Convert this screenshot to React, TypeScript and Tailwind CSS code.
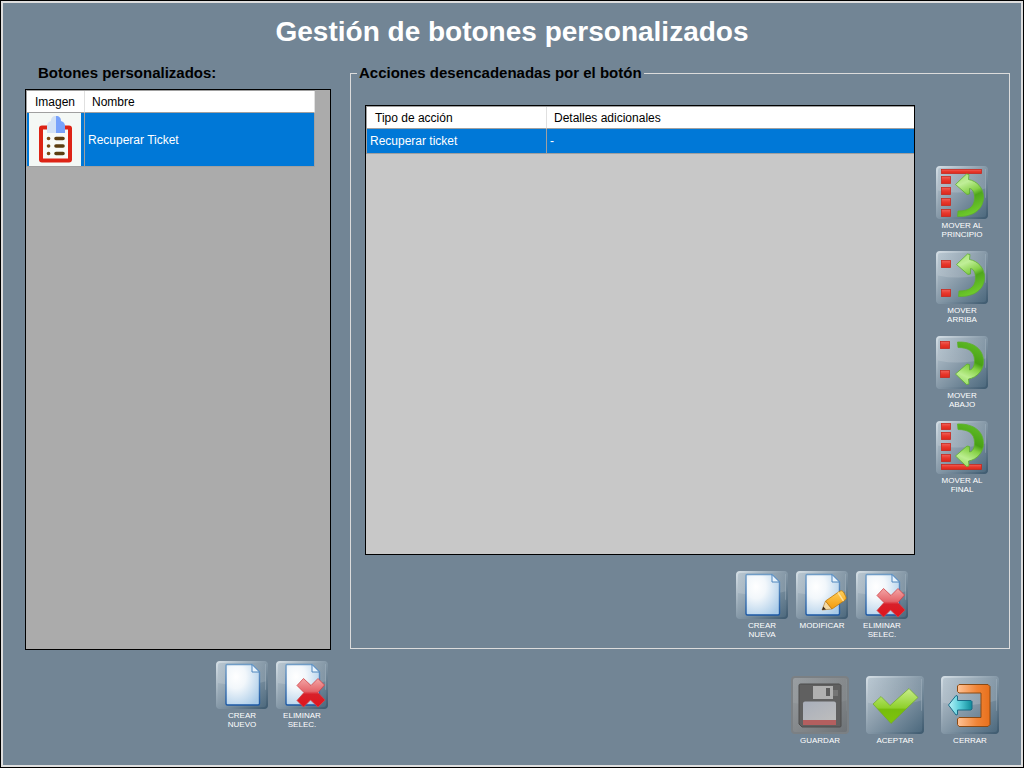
import type { ReactNode } from "react";

/* Gradients shared by every icon */
function IconDefs() {
  return (
    <svg className="absolute h-0 w-0" aria-hidden="true">
      <defs>
        <linearGradient id="tile" x1="0" y1="0" x2="1" y2="1">
          <stop offset="0" stopColor="#bccad4" />
          <stop offset="0.45" stopColor="#8c9eac" />
          <stop offset="1" stopColor="#4a677c" />
        </linearGradient>
        <linearGradient id="tileGray" x1="0" y1="0" x2="1" y2="1">
          <stop offset="0" stopColor="#9a9fa3" />
          <stop offset="0.5" stopColor="#85898c" />
          <stop offset="1" stopColor="#6d7276" />
        </linearGradient>
        <linearGradient id="gloss" x1="0" y1="0" x2="0" y2="1">
          <stop offset="0" stopColor="#fff" stopOpacity="0" />
          <stop offset="1" stopColor="#fff" stopOpacity="0.16" />
        </linearGradient>
        <linearGradient id="edge" x1="0" y1="0" x2="1" y2="1">
          <stop offset="0" stopColor="#d3dde4" />
          <stop offset="0.5" stopColor="#8598a7" />
          <stop offset="1" stopColor="#3f5b70" />
        </linearGradient>
        <linearGradient id="green" x1="0.1" y1="0" x2="0.4" y2="1">
          <stop offset="0" stopColor="#a4e070" />
          <stop offset="0.25" stopColor="#c0ee98" />
          <stop offset="0.5" stopColor="#86d048" />
          <stop offset="0.62" stopColor="#4fa61c" />
          <stop offset="1" stopColor="#70cc2c" />
        </linearGradient>
        <linearGradient id="greenDown" x1="0.4" y1="0" x2="0.1" y2="1">
          <stop offset="0" stopColor="#5cb824" />
          <stop offset="0.36" stopColor="#48a014" />
          <stop offset="0.5" stopColor="#84d044" />
          <stop offset="0.75" stopColor="#bcee90" />
          <stop offset="1" stopColor="#8ed858" />
        </linearGradient>
        <linearGradient id="check" x1="0" y1="0" x2="0" y2="1">
          <stop offset="0" stopColor="#c9ee8c" />
          <stop offset="0.55" stopColor="#8fd02c" />
          <stop offset="0.6" stopColor="#76bd0c" />
          <stop offset="1" stopColor="#7fc40c" />
        </linearGradient>
        <linearGradient id="red" x1="0" y1="0" x2="0" y2="1">
          <stop offset="0" stopColor="#f0625a" />
          <stop offset="0.5" stopColor="#e8382c" />
          <stop offset="1" stopColor="#dc281c" />
        </linearGradient>
        <linearGradient id="cross" x1="0" y1="0" x2="0" y2="1">
          <stop offset="0" stopColor="#f4a6a6" />
          <stop offset="0.45" stopColor="#e4656a" />
          <stop offset="0.55" stopColor="#d8202a" />
          <stop offset="1" stopColor="#e0141c" />
        </linearGradient>
        <radialGradient id="paper" cx="0.3" cy="0.3" r="0.85">
          <stop offset="0" stopColor="#ffffff" />
          <stop offset="0.35" stopColor="#f2f7fb" />
          <stop offset="1" stopColor="#a9cbe8" />
        </radialGradient>
        <linearGradient id="paperEdge" x1="0" y1="0" x2="0" y2="1">
          <stop offset="0" stopColor="#6f9cc6" />
          <stop offset="1" stopColor="#1c58a4" />
        </linearGradient>
        <linearGradient id="pencil" x1="0" y1="0" x2="0" y2="1">
          <stop offset="0" stopColor="#ffcf5a" />
          <stop offset="1" stopColor="#f29a0c" />
        </linearGradient>
        <linearGradient id="orange" x1="0" y1="0" x2="1" y2="0">
          <stop offset="0" stopColor="#ffc396" />
          <stop offset="0.6" stopColor="#f08436" />
          <stop offset="1" stopColor="#e8701c" />
        </linearGradient>
        <linearGradient id="cyan" x1="0" y1="0" x2="1" y2="0">
          <stop offset="0" stopColor="#b8f4fa" />
          <stop offset="0.5" stopColor="#56ccd8" />
          <stop offset="1" stopColor="#0d8a98" />
        </linearGradient>
        <linearGradient id="floppyLabel" x1="0" y1="0" x2="1" y2="1">
          <stop offset="0" stopColor="#a9afbb" />
          <stop offset="1" stopColor="#bdbdbd" />
        </linearGradient>
      </defs>
    </svg>
  );
}

type TileProps = { width: number; height: number; gray?: boolean; children: ReactNode };

function Tile({ width: w, height: h, gray, children }: TileProps) {
  return (
    <svg width={w} height={h} viewBox={`0 0 ${w} ${h}`} aria-hidden="true">
      <rect x="0.5" y="0.5" width={w - 1} height={h - 1} rx="3.5" fill={gray ? "url(#tileGray)" : "url(#tile)"} />
      <path
        d={`M2 2H${w - 2}V${h * 0.42}Q${w / 2} ${h * 0.56} 2 ${h * 0.46}Z`}
        fill="url(#gloss)"
        opacity={gray ? 0.4 : 1}
      />
      <rect
        x="1"
        y="1"
        width={w - 2}
        height={h - 2}
        rx="3"
        fill="none"
        stroke={gray ? "#7b8084" : "url(#edge)"}
        strokeWidth="2"
      />
      <path d={`M${w - 2.5} 3V${h * 0.6}`} stroke="#a9bac6" strokeOpacity={gray ? 0.1 : 0.4} />
      {children}
    </svg>
  );
}

function IconButton({ label, disabled, children }: { label: string; disabled?: boolean; children: ReactNode }) {
  return (
    <button
      type="button"
      disabled={disabled}
      className="flex flex-col items-center gap-[2px] text-[8px] leading-[9px] text-white"
    >
      {children}
      <span className="w-0 min-w-full text-center">{label}</span>
    </button>
  );
}

function Block({ x, y, w = 9, h = 8 }: { x: number; y: number; w?: number; h?: number }) {
  return <rect x={x + 0.5} y={y + 0.5} width={w} height={h - 1} fill="url(#red)" stroke="#c8281e" strokeWidth="0.8" />;
}

const ARROW_UP =
  "M19.5 18.5L30.5 8L33 8.5L32.500 13.500C41 15 47.500 22 47.500 31C47.500 43 38 51 21.500 50.500L22 45C31 45 38.500 42 38.500 32C38.500 26 36.500 23 33.500 22.500V28L31 28.500Z";
const ARROW_DOWN =
  "M19.5 38L30.5 48.500L33 48L32.500 43C41 41.500 47.500 34.500 47.500 25.500C47.500 13.500 38 5.500 21.500 6L22 11.500C31 11.500 38.500 14.500 38.500 24.500C38.500 30.500 36.500 33.500 33.500 34V28.500L31 28Z";

function Arrow({ down, dx = 0, dy = 0 }: { down?: boolean; dx?: number; dy?: number }) {
  return (
    <path
      d={down ? ARROW_DOWN : ARROW_UP}
      transform={`translate(${dx} ${dy})`}
      fill={down ? "url(#greenDown)" : "url(#green)"}
      stroke="#5fae30"
      strokeWidth="0.8"
      strokeLinejoin="round"
    />
  );
}

function Page() {
  return (
    <>
      <path d="M11 3.5H36L43.5 11V42.5Q43.5 44 42 44H11.5Q10 44 10 42.5V4.5Q10 3.5 11 3.5Z" fill="url(#paper)" stroke="url(#paperEdge)" strokeWidth="1.4" />
      <path d="M36 3.5V11H43.5Z" fill="#e8f3fc" stroke="#4f86bd" />
    </>
  );
}

function Cross() {
  return (
    <path
      d="M27.500 17.500L35 24.500L42 17.500L48.500 24L42 31.500L49 39L42 46L34.500 39L27.500 46L21 39.500L28 31.500L21 24.500Z"
      fill="url(#cross)"
      stroke="#d04448"
      strokeWidth="0.8"
      strokeLinejoin="round"
    />
  );
}

function Clipboard() {
  return (
    <svg width="52" height="53" viewBox="0 0 52 53" role="img" aria-label="Ticket" className="ml-[2px] block">
      <rect width="52" height="53" fill="#f4f8f5" />
      <rect x="12" y="14.5" width="29" height="33" rx="1" fill="#f7faf8" stroke="#dd2416" strokeWidth="4" />
      <path d="M27 3C23.500 3 22 5 22 8C19.500 8.500 18 10.500 18 13V20H27Z" fill="#d3e2f6" />
      <path d="M27 3C30.500 3 32 5 32 8C34.500 8.500 36 10.500 36 13V20H27Z" fill="#78a2fb" />
      <g stroke="#5b3d10" strokeWidth="3.6" strokeLinecap="round">
        <path d="M27 25.500H34M27 33H34M27 40.500H34" />
        <path d="M19.500 25.500h.1M19.500 33h.1M19.500 40.500h.1" stroke="#7b4a14" />
      </g>
    </svg>
  );
}

const headCell = "h-[22px] border-b border-b-[#a0a0a0] p-0 text-left font-normal";

export default function App() {
  return (
    <div className="flex min-h-screen border border-black font-['Liberation_Sans',Arial,sans-serif]">
      <IconDefs />
      <main className="flex flex-1 flex-col border-2 border-[#dedede] bg-[#728595]">
        <h1 className="pt-[11px] text-center text-[28px] leading-[36px] font-bold text-white">
          Gestión de botones personalizados
        </h1>

        <div className="mt-[14px] flex flex-1 gap-[19px] pr-[11px] pl-[22px]">
          {/* Custom buttons */}
          <section className="flex w-[306px] shrink-0 flex-col pb-[36px]">
            <h2 id="buttons-title" className="pl-[13px] text-[15px] leading-[18px] font-bold text-black">
              Botones personalizados:
            </h2>
            <div className="mt-[7px] flex-1 border border-black bg-[#ababab]">
              <table
                aria-labelledby="buttons-title"
                className="w-[289px] table-fixed border-separate border-spacing-0 border-t border-l border-[#a0a0a0] text-[12px] leading-[16px]"
              >
                <thead className="bg-white text-black">
                  <tr>
                    <th className={`${headCell} w-[58px] border-r border-r-[#e0e0e0] pl-[8px]`}>Imagen</th>
                    <th className={`${headCell} border-r border-r-[#e0e0e0] pl-[7px]`}>Nombre</th>
                  </tr>
                </thead>
                <tbody className="bg-[#0078d7] text-white">
                  <tr>
                    <td className="border-r border-b border-[#a0a0a0] p-0">
                      <Clipboard />
                    </td>
                    <td className="border-r border-b border-[#a0a0a0] py-0 pr-0 pl-[3px]">Recuperar Ticket</td>
                  </tr>
                </tbody>
              </table>
            </div>
            <div className="mt-[11px] flex items-start justify-end gap-2 pr-[3px]">
              <IconButton label="CREAR NUEVO">
                <Tile width={52} height={48}>
                  <Page />
                </Tile>
              </IconButton>
              <IconButton label="ELIMINAR SELEC.">
                <Tile width={52} height={48}>
                  <Page />
                  <Cross />
                </Tile>
              </IconButton>
            </div>
          </section>

          <div className="flex min-w-0 flex-1 flex-col pb-[20px]">
            {/* Actions of the selected button */}
            <fieldset className="flex flex-1 gap-[21px] border border-[#dcdcdc] pt-[23px] pr-[21px] pb-[9px] pl-[6px]">
              <legend id="actions-title" className="px-[2px] text-[15px] leading-[18px] font-bold text-black">
                Acciones desencadenadas por el botón
              </legend>
              <div className="ml-[8px] flex flex-1 flex-col">
                <div className="flex-1 border border-black bg-[#c8c8c8]">
                  <table
                    aria-labelledby="actions-title"
                    className="w-full table-fixed border-separate border-spacing-0 border-t border-l border-[#a0a0a0] text-[12px] leading-[16px]"
                  >
                    <thead className="bg-white text-black">
                      <tr>
                        <th className={`${headCell} w-[180px] border-r border-r-[#e0e0e0] pl-[8px]`}>Tipo de acción</th>
                        <th className={`${headCell} pl-[7px]`}>Detalles adicionales</th>
                      </tr>
                    </thead>
                    <tbody className="bg-[#0078d7] text-white">
                      <tr>
                        <td className="h-[25px] border-r border-b border-[#a0a0a0] py-0 pr-0 pl-[3px]">Recuperar ticket</td>
                        <td className="h-[25px] border-b border-[#a0a0a0] py-0 pr-0 pl-[3px]">-</td>
                      </tr>
                    </tbody>
                  </table>
                </div>
                <div className="mt-4 flex items-start justify-end gap-2 pr-[7px]">
                  <IconButton label="CREAR NUEVA">
                    <Tile width={52} height={48}>
                      <Page />
                    </Tile>
                  </IconButton>
                  <IconButton label="MODIFICAR">
                    <Tile width={52} height={48}>
                      <Page />
                      <path d="M26 39L29.500 30L36 38Z" fill="#f3d9a4" stroke="#a9762a" strokeWidth="0.6" />
                      <path d="M26 39L27.300 35.500L30 38.500Z" fill="#3a2a1c" />
                      <path d="M29.500 30L44 20Q46 19 47.500 21L50 26Q50.500 28 49 29L36 38Z" fill="url(#pencil)" stroke="#c27a0a" strokeWidth="0.8" />
                      <path d="M42 21.500L47.500 30" stroke="#ffe09a" strokeWidth="1.4" />
                    </Tile>
                  </IconButton>
                  <IconButton label="ELIMINAR SELEC.">
                    <Tile width={52} height={48}>
                      <Page />
                      <Cross />
                    </Tile>
                  </IconButton>
                </div>
              </div>

              <div className="flex flex-col gap-3 pt-[61px]">
                <IconButton label="MOVER AL PRINCIPIO">
                  <Tile width={52} height={53}>
                    <Block x={5} y={3} w={40} h={5} />
                    <Block x={5} y={10} />
                    <Block x={5} y={21} />
                    <Block x={5} y={32} />
                    <Block x={5} y={43} />
                    <Arrow />
                  </Tile>
                </IconButton>
                <IconButton label="MOVER ARRIBA">
                  <Tile width={52} height={53}>
                    <Block x={5} y={9} />
                    <Block x={5} y={38} />
                    <Arrow dx={1} dy={-5} />
                  </Tile>
                </IconButton>
                <IconButton label="MOVER ABAJO">
                  <Tile width={52} height={53}>
                    <Block x={4} y={5} />
                    <Block x={4} y={34} />
                    <Arrow down />
                  </Tile>
                </IconButton>
                <IconButton label="MOVER AL FINAL">
                  <Tile width={52} height={53}>
                    <Block x={5} y={2} h={7} />
                    <Block x={5} y={11} />
                    <Block x={5} y={22} />
                    <Block x={5} y={33} />
                    <Block x={5} y={43} w={40} h={6} />
                    <Arrow down dy={-3} />
                  </Tile>
                </IconButton>
              </div>
            </fieldset>

            {/* Form buttons */}
            <div className="mt-[27px] flex items-start justify-end gap-[17px] pr-[11px]">
              <IconButton label="GUARDAR" disabled>
                <Tile width={58} height={58} gray>
                  <path d="M9.500 8H48.500L50 9.500V50Q50 51 49 51H11L8 48V9.500Q8 8 9.500 8Z" fill="#606060" stroke="#4c4c4c" />
                  <rect x="22" y="10" width="20" height="13" fill="#b0b0b0" />
                  <rect x="35" y="12" width="4" height="8" fill="#5c5c5c" />
                  <rect x="42" y="14" width="5" height="6" fill="#757575" />
                  <path d="M14 25.500H43Q45 25.500 45 27.500V44H12V27.500Q12 25.500 14 25.500Z" fill="url(#floppyLabel)" />
                  <rect x="12" y="44" width="33" height="5" fill="#b35f5f" />
                </Tile>
              </IconButton>
              <IconButton label="ACEPTAR">
                <Tile width={58} height={58}>
                  <path d="M7 28L15 20.500L24 29.500L43 12.500L52 21.500L25 47.500Z" fill="url(#check)" stroke="#6fa82a" strokeWidth="0.7" />
                </Tile>
              </IconButton>
              <IconButton label="CERRAR">
                <Tile width={58} height={58}>
                  <path
                    d="M18 8.500H47L49 10.500V48.500L47 50.500H18L16.500 48.500V43L18 41.500H40V17H18L16.500 15.500V10Z"
                    fill="url(#orange)"
                    stroke="#8a4a14"
                    strokeLinejoin="round"
                  />
                  <path d="M7.500 29L15 19.500L16.500 20V24.500H30L31 25.500V33L30 34H16.500V38.500L15 39Z" fill="url(#cyan)" stroke="#1c6a86" strokeLinejoin="round" />
                </Tile>
              </IconButton>
            </div>
          </div>
        </div>
      </main>
    </div>
  );
}
